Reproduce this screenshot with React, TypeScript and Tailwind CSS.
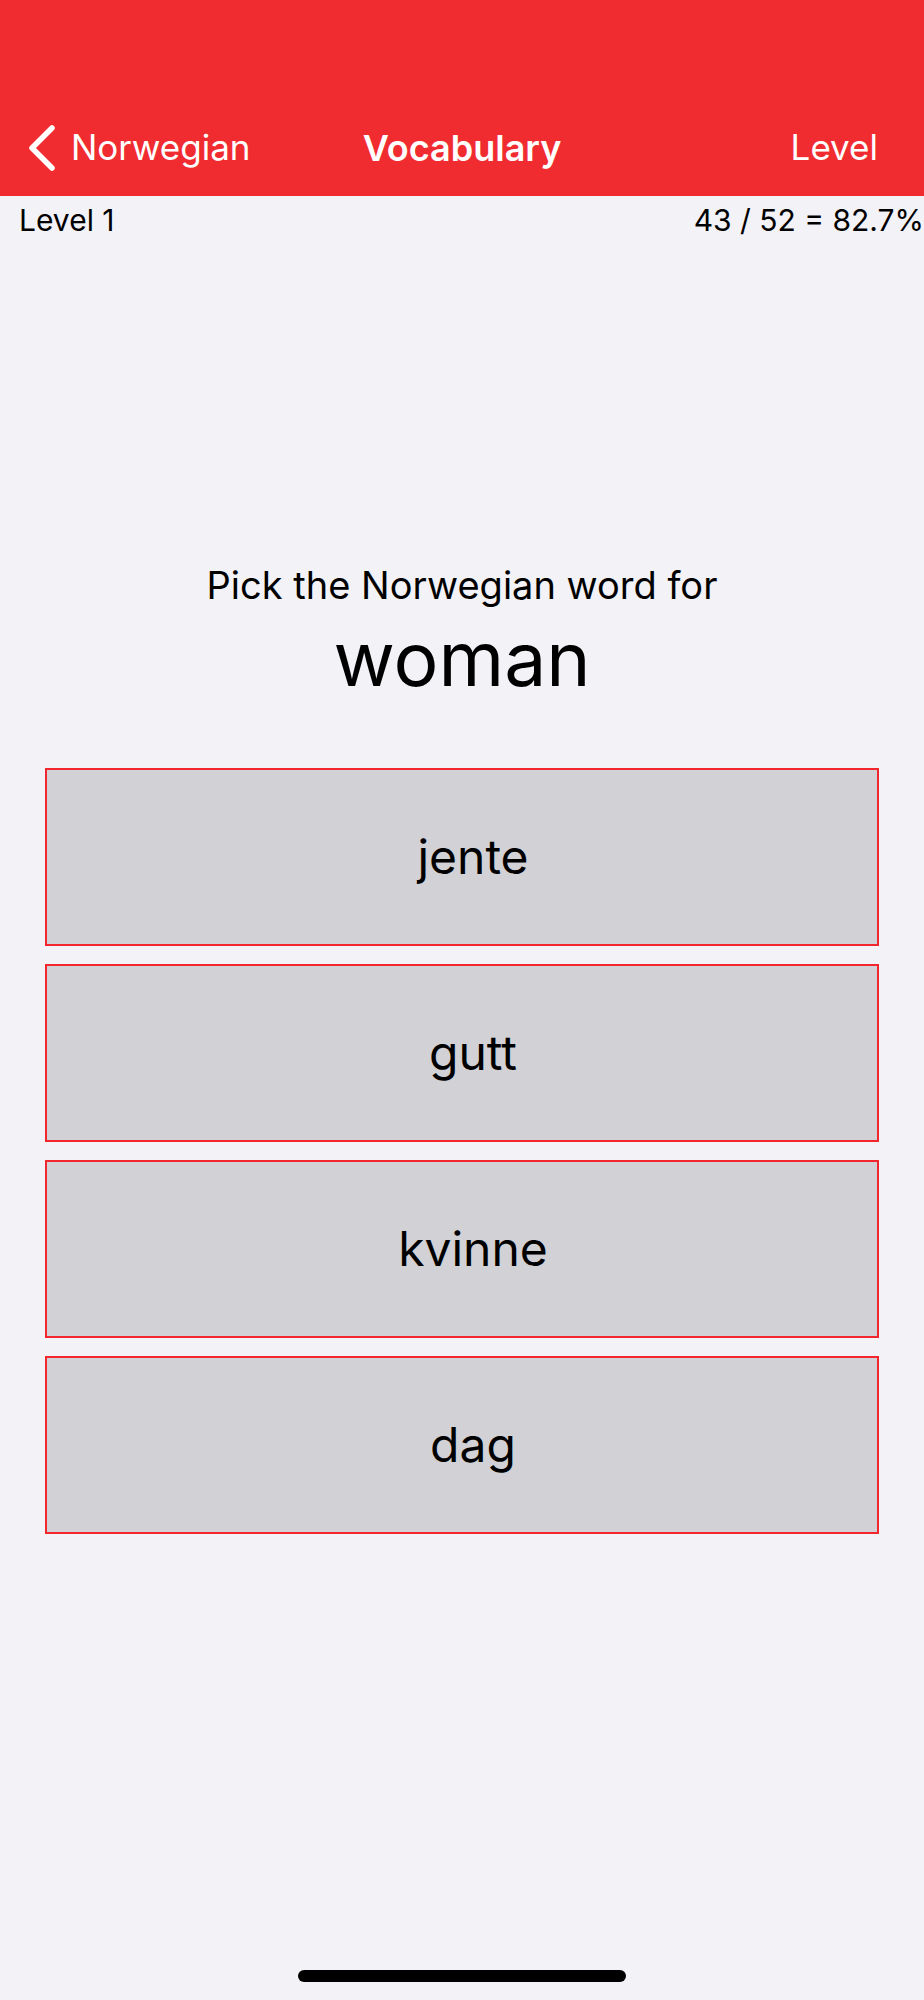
import React from "react";

const choices = ["jente", "gutt", "kvinne", "dag"];

const Header = (): React.JSX.Element => (
  <header className="h-[196px] bg-[#f12c31] pt-[100px] text-white">
    <div className="relative flex h-[95px] items-center">
      <div className="flex items-center pl-[28px]">
        <svg width="28" height="46" viewBox="0 0 28 46" fill="none">
          <path
            d="M24 3 L4 23 L24 43"
            stroke="white"
            strokeWidth="5.5"
            strokeLinecap="round"
            strokeLinejoin="round"
          />
        </svg>
        <span className="ml-[15px] text-[35px] leading-none">Norwegian</span>
      </div>
      <h1 className="absolute left-1/2 -translate-x-1/2 text-[36px] font-semibold leading-none">
        Vocabulary
      </h1>
      <span className="ml-auto pr-[46px] text-[35px] leading-none">Level</span>
    </div>
  </header>
);

const App = (): React.JSX.Element => (
  <div
    className="flex min-h-[2000px] flex-col bg-[#f2f2f7] text-black"
    style={{ fontFamily: "Inter, 'Noto Sans', sans-serif" }}
  >
    <Header />
    <div className="mt-[6px] flex justify-between pl-[19px] text-[30px] leading-[36px]">
      <span>Level 1</span>
      <span className="whitespace-nowrap">43 / 52 = 82.7%</span>
    </div>
    <section className="mt-[324px] flex flex-col items-center">
      <p className="text-[38px] leading-[46px]">Pick the Norwegian word for</p>
      <p className="mt-[8px] text-[75px] leading-[86px]">woman</p>
    </section>
    <div className="mt-[66px] flex flex-col gap-[18px] px-[45px]">
      {choices.map((word) => (
        <button
          key={word}
          className="flex h-[178px] items-center justify-center border-2 border-[#f2262d] bg-[#d1d1d6] pl-[22px] text-[48px]"
        >
          {word}
        </button>
      ))}
    </div>
    <div className="mt-auto mb-[18px] flex justify-center">
      <div className="h-[12px] w-[328px] rounded-full bg-black" />
    </div>
  </div>
);

export default App;
